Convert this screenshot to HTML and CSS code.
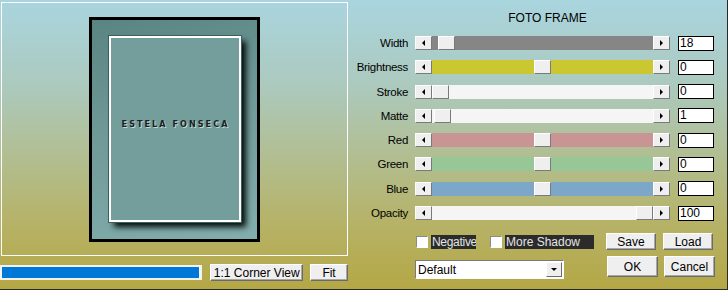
FILE: index.html
```html
<!DOCTYPE html>
<html lang="en">
<head>
    <meta charset="UTF-8">
    <title>Foto Frame</title>
    <link rel="stylesheet" href="styles.css">
</head>
<body>
    <div class="dialog">
        <div class="left">
            <div class="preview">
                <div class="frame">
                    <div class="photo">
                        <span class="photo-text">ESTELA FONSECA</span>
                    </div>
                </div>
            </div>
            <div class="left-bar">
                <div class="progress"><div class="progress-fill"></div></div>
                <button class="btn btn-corner">1:1 Corner View</button>
                <button class="btn btn-fit">Fit</button>
            </div>
        </div>

        <div class="right">
            <div class="title">FOTO FRAME</div>
            <div class="rows">
                <div class="row">
                    <label>Width</label>
                    <div class="scroll">
                        <span class="arrow arrow-left"></span>
                        <div class="track track-gray"><span class="thumb" style="left: 6px"></span></div>
                        <span class="arrow arrow-right"></span>
                    </div>
                    <div class="value">18</div>
                </div>
                <div class="row">
                    <label>Brightness</label>
                    <div class="scroll">
                        <span class="arrow arrow-left"></span>
                        <div class="track track-yellow"><span class="thumb" style="left: 102px"></span></div>
                        <span class="arrow arrow-right"></span>
                    </div>
                    <div class="value">0</div>
                </div>
                <div class="row">
                    <label>Stroke</label>
                    <div class="scroll">
                        <span class="arrow arrow-left"></span>
                        <div class="track track-white"><span class="thumb" style="left: 0px"></span></div>
                        <span class="arrow arrow-right"></span>
                    </div>
                    <div class="value">0</div>
                </div>
                <div class="row">
                    <label>Matte</label>
                    <div class="scroll">
                        <span class="arrow arrow-left"></span>
                        <div class="track track-white"><span class="thumb" style="left: 2px"></span></div>
                        <span class="arrow arrow-right"></span>
                    </div>
                    <div class="value">1</div>
                </div>
                <div class="row">
                    <label>Red</label>
                    <div class="scroll">
                        <span class="arrow arrow-left"></span>
                        <div class="track track-red"><span class="thumb" style="left: 102px"></span></div>
                        <span class="arrow arrow-right"></span>
                    </div>
                    <div class="value">0</div>
                </div>
                <div class="row">
                    <label>Green</label>
                    <div class="scroll">
                        <span class="arrow arrow-left"></span>
                        <div class="track track-green"><span class="thumb" style="left: 102px"></span></div>
                        <span class="arrow arrow-right"></span>
                    </div>
                    <div class="value">0</div>
                </div>
                <div class="row">
                    <label>Blue</label>
                    <div class="scroll">
                        <span class="arrow arrow-left"></span>
                        <div class="track track-blue"><span class="thumb" style="left: 102px"></span></div>
                        <span class="arrow arrow-right"></span>
                    </div>
                    <div class="value">0</div>
                </div>
                <div class="row">
                    <label>Opacity</label>
                    <div class="scroll">
                        <span class="arrow arrow-left"></span>
                        <div class="track track-white"><span class="thumb" style="left: 204px"></span></div>
                        <span class="arrow arrow-right"></span>
                    </div>
                    <div class="value">100</div>
                </div>
            </div>

            <div class="options">
                <span class="check"></span>
                <span class="check-label check-negative">Negative</span>
                <span class="check check-second"></span>
                <span class="check-label check-shadow">More Shadow</span>
                <button class="btn btn-small btn-save">Save</button>
                <button class="btn btn-small">Load</button>
            </div>
            <div class="actions">
                <div class="select">
                    <span class="select-text">Default</span>
                    <span class="select-arrow"></span>
                </div>
                <button class="btn btn-big btn-ok">OK</button>
                <button class="btn btn-big">Cancel</button>
            </div>
        </div>
    </div>
</body>
</html>
```

FILE: styles.css
```css
* {
    box-sizing: border-box;
}
body {
    margin: 0;
    font-family: 'Liberation Sans', Arial, sans-serif;
    font-size: 11px;
    color: #000;
}
.dialog {
    width: 728px;
    height: 290px;
    display: flex;
    background: linear-gradient(#a9d5df 0%, #acc9bd 30%, #b1bf95 52%, #b6b266 78%, #b4a745 100%);
    border-right: 1px solid #2a2a2a;
    border-bottom: 1px solid #2a2a2a;
}

/* preview side */
.left {
    width: 348px;
}
.preview {
    width: 347px;
    height: 254px;
    margin: 2px 0 0 1px;
    border: 1px solid #fff;
    display: flex;
    justify-content: center;
    align-items: center;
}
.frame {
    width: 171px;
    height: 225px;
    border: 3px solid #000;
    background: linear-gradient(165deg, #5a8482 0%, #6f9a98 45%, #82aead 100%);
    display: flex;
    justify-content: center;
    align-items: center;
    padding-bottom: 1px;
}
.photo {
    width: 132px;
    height: 186px;
    background-color: #739e9c;
    border: 2px solid #fff;
    box-shadow: 0 0 0 1px #3e605e, 5px 5px 6px #050c0b;
    display: flex;
    justify-content: center;
    align-items: center;
}
.photo-text {
    font-family: 'DejaVu Sans', sans-serif;
    font-size: 8px;
    font-weight: bold;
    letter-spacing: 2.1px;
    color: #1a2222;
    text-shadow: 1px 1px 0 #c4d6d5;
    margin-bottom: 8px;
    margin-left: 2px;
}
.left-bar {
    display: flex;
    align-items: flex-start;
    margin-top: 8px;
}
.progress {
    width: 203px;
    height: 15px;
    margin-top: 1px;
    border: 2px solid #f2f2f2;
    background-color: #fff;
}
.progress-fill {
    width: 197px;
    height: 100%;
    background-color: #0078d7;
}

/* buttons */
.btn {
    font-family: 'Liberation Sans', Arial, sans-serif;
    font-size: 12px;
    color: #000;
    background-color: #efefef;
    border: 1px solid;
    border-color: #fff #6a6a6a #6a6a6a #fff;
    box-shadow: inset -1px -1px 0 #a8a8a8;
    padding: 0;
    margin: 0;
    line-height: 1;
}
.btn-corner {
    width: 93px;
    height: 17px;
    margin-left: 8px;
}
.btn-fit {
    width: 38px;
    height: 17px;
    margin-left: 7px;
}
.btn-small {
    width: 50px;
    height: 17px;
}
.btn-big {
    width: 51px;
    height: 21px;
}
.btn-save {
    margin-left: 12px;
    margin-right: 7px;
}
.btn-ok {
    margin-left: 43px;
    margin-right: 6px;
}

/* controls side */
.right {
    flex: 1;
    padding-top: 11px;
}
.title {
    font-size: 12px;
    line-height: 14px;
    text-align: center;
    padding-left: 20px;
    margin-bottom: 11px;
}
.rows {
    display: flex;
    flex-direction: column;
    gap: 10.3px;
}
.row {
    display: flex;
    align-items: center;
    height: 14px;
}
.row label {
    width: 60px;
    text-align: right;
    font-size: 11.5px;
    letter-spacing: -0.3px;
    margin-right: 7px;
}
.scroll {
    display: flex;
    height: 14px;
    width: 255px;
}
.arrow {
    width: 17px;
    height: 14px;
    background-color: #efefef;
    border: 1px solid;
    border-color: #fff #7a7a7a #7a7a7a #fff;
    display: flex;
    justify-content: center;
    align-items: center;
}
.arrow::before {
    content: "";
    border-top: 3px solid transparent;
    border-bottom: 3px solid transparent;
}
.arrow-left::before {
    border-right: 3px solid #000;
}
.arrow-right::before {
    border-left: 3px solid #000;
}
.track {
    flex: 1;
    position: relative;
}
.track-gray { background-color: #868686; }
.track-yellow { background-color: #cbc731; }
.track-white { background-color: #f5f5f5; }
.track-red { background-color: #c99494; }
.track-green { background-color: #97c796; }
.track-blue { background-color: #7ca7c8; }
.thumb {
    position: absolute;
    top: 0;
    width: 17px;
    height: 14px;
    background-color: #efefef;
    border: 1px solid;
    border-color: #fff #7a7a7a #7a7a7a #fff;
}
.value {
    width: 36px;
    height: 15px;
    margin-left: 8px;
    background-color: #fff;
    border: 1px solid #000;
    font-size: 12px;
    line-height: 13px;
    padding-left: 1px;
}

.options {
    display: flex;
    align-items: center;
    margin-top: 13px;
    height: 17px;
    padding-left: 68px;
}
.check {
    width: 12px;
    height: 12px;
    background-color: #fff;
    border: 1px solid;
    border-color: #8a8a8a #fff #fff #8a8a8a;
}
.check-label {
    background-color: #2b2b2b;
    color: #e4e4e4;
    font-size: 12px;
    height: 14px;
    line-height: 14px;
    margin-left: 3px;
    padding-left: 1px;
    white-space: nowrap;
    overflow: hidden;
}
.check-negative {
    width: 45px;
    letter-spacing: -0.3px;
}
.check-second {
    margin-left: 14px;
}
.check-shadow {
    width: 89px;
}
.actions {
    display: flex;
    align-items: flex-start;
    margin-top: 6px;
    padding-left: 67px;
}
.select {
    width: 149px;
    height: 19px;
    margin-top: 4px;
    background-color: #fff;
    border: 1px solid;
    border-color: #7a7a7a #fff #fff #7a7a7a;
    display: flex;
    align-items: center;
    justify-content: space-between;
}
.select-text {
    font-size: 12px;
    padding-left: 2px;
}
.select-arrow {
    width: 16px;
    height: 15px;
    margin-right: 1px;
    background-color: #efefef;
    border: 1px solid;
    border-color: #fff #6a6a6a #6a6a6a #fff;
    display: flex;
    justify-content: center;
    align-items: center;
}
.select-arrow::before {
    content: "";
    border-left: 3px solid transparent;
    border-right: 3px solid transparent;
    border-top: 3px solid #000;
}
```
